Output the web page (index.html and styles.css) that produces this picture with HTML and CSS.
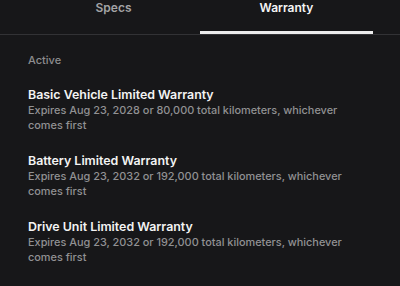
FILE: index.html
```html
<!DOCTYPE html>
<html lang="en">
<head>
<meta charset="utf-8">
<link rel="stylesheet" href="styles.css">
</head>
<body>
<div class="page">
  <nav class="tabs">
    <div class="tab">Specs</div>
    <div class="tab active">Warranty</div>
  </nav>
  <section class="content">
    <div class="section-label">Active</div>
    <div class="item">
      <div class="title">Basic Vehicle Limited Warranty</div>
      <div class="desc">Expires Aug 23, 2028 or 80,000 total kilometers, whichever comes first</div>
    </div>
    <div class="item">
      <div class="title">Battery Limited Warranty</div>
      <div class="desc">Expires Aug 23, 2032 or 192,000 total kilometers, whichever comes first</div>
    </div>
    <div class="item">
      <div class="title">Drive Unit Limited Warranty</div>
      <div class="desc">Expires Aug 23, 2032 or 192,000 total kilometers, whichever comes first</div>
    </div>
  </section>
</div>
</body>
</html>
```
FILE: styles.css
```css
html, body {
  margin: 0;
  padding: 0;
  background: #171719;
}
body {
  width: 400px;
  height: 286px;
  overflow: hidden;
  font-family: Inter, "Noto Sans", "Liberation Sans", sans-serif;
  -webkit-font-smoothing: antialiased;
}
.page {
  display: flex;
  flex-direction: column;
}
.tabs {
  display: flex;
  padding: 0 27px;
  border-bottom: 1px solid #323235;
}
.tab {
  flex: 1;
  text-align: center;
  font-size: 12px;
  line-height: 16px;
  font-weight: 600;
  color: #a3a3a5;
  height: 31px;
  border-bottom: 3px solid transparent;
}
.tab.active {
  color: #f4f4f4;
  border-bottom-color: #ececec;
}
.content {
  display: flex;
  flex-direction: column;
  gap: 20px;
  padding: 18px 32px 0 28px;
}
.section-label {
  font-size: 11px;
  line-height: 14px;
  font-weight: 500;
  color: #8d8d8f;
}
.item {
  display: flex;
  flex-direction: column;
}
.title {
  font-size: 12.4px;
  line-height: 15px;
  font-weight: 600;
  color: #f3f3f3;
}
.desc {
  font-size: 10.9px;
  line-height: 15px;
  font-weight: 500;
  color: #919193;
  margin-top: 1px;
}
```
